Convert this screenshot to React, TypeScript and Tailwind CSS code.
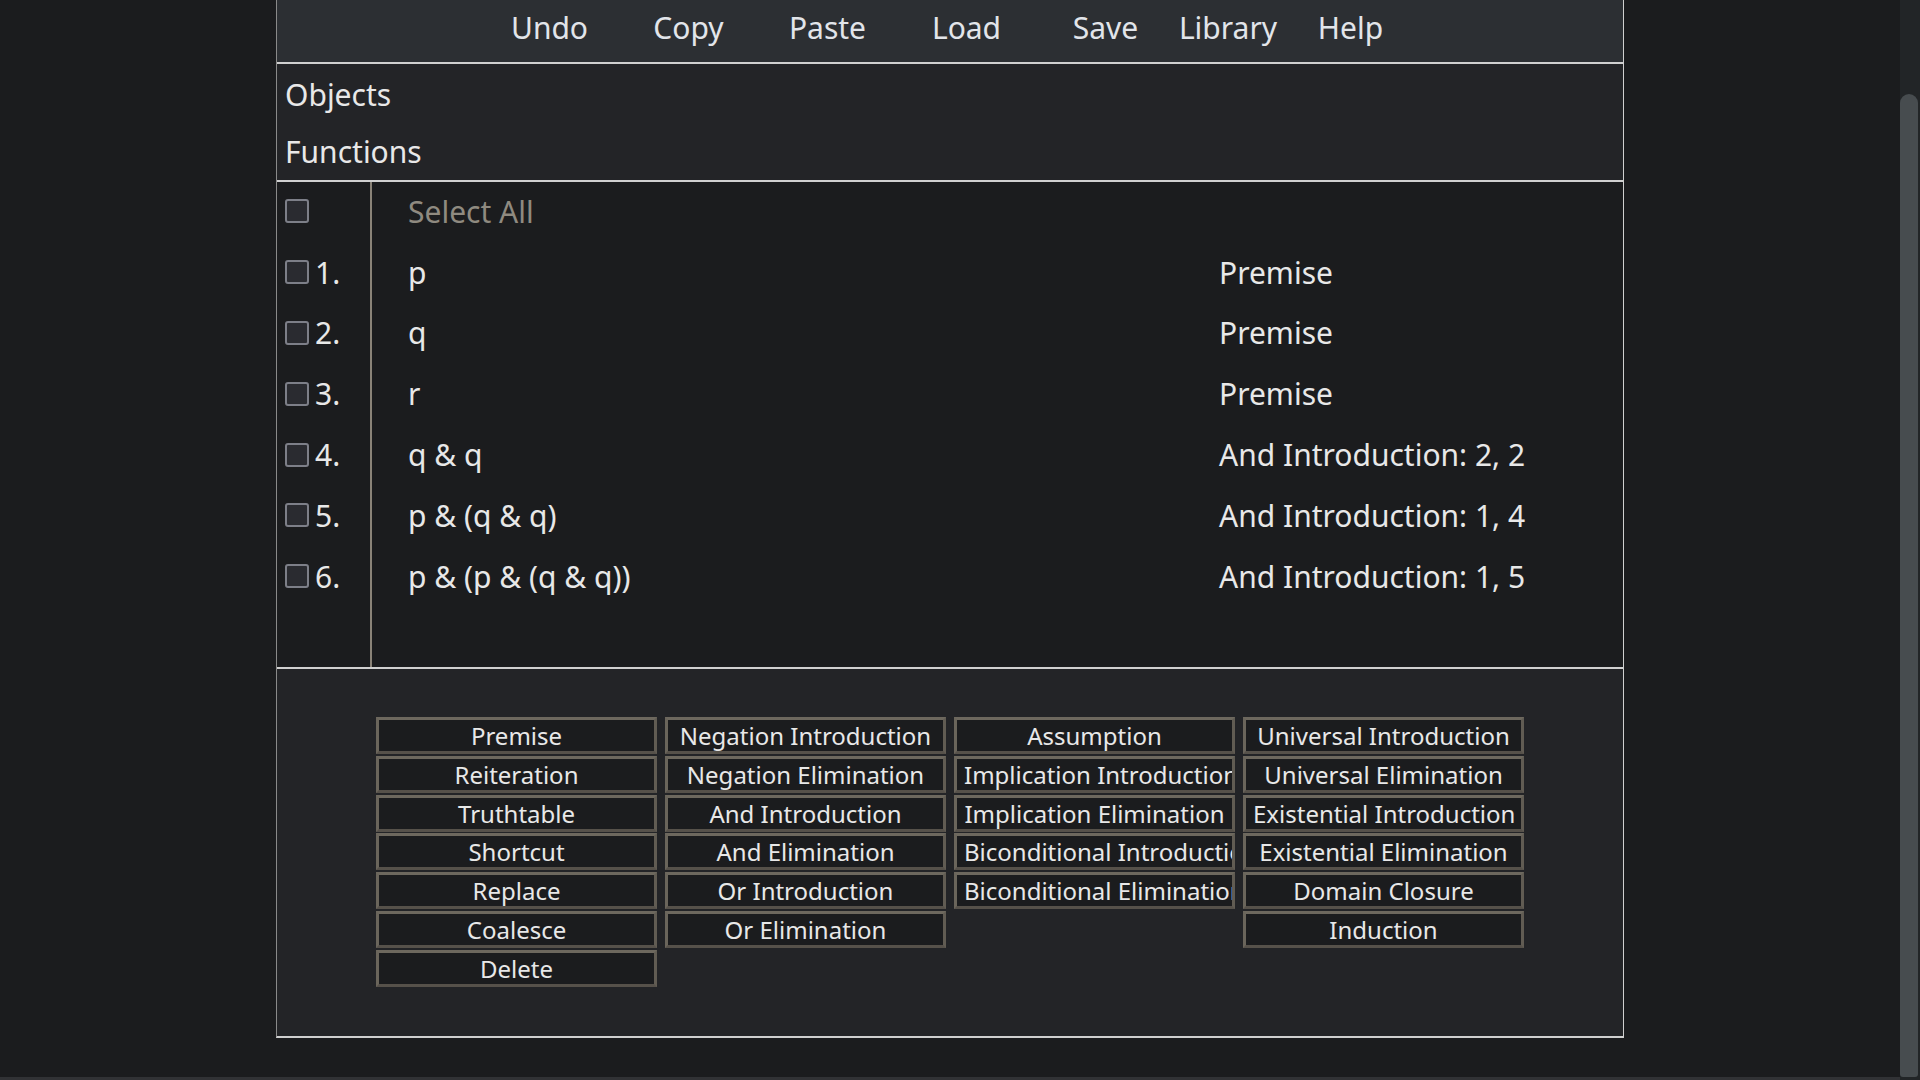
import React from "react";

const menu = [
  { label: "Undo", w: "w-[139px]" },
  { label: "Copy", w: "w-[139px]" },
  { label: "Paste", w: "w-[139px]" },
  { label: "Load", w: "w-[139px]" },
  { label: "Save", w: "w-[139px]" },
  { label: "Library", w: "w-[106px]" },
  { label: "Help", w: "w-[139px]" },
];

const lines = [
  { n: "1.", f: "p", j: "Premise" },
  { n: "2.", f: "q", j: "Premise" },
  { n: "3.", f: "r", j: "Premise" },
  { n: "4.", f: "q & q", j: "And Introduction: 2, 2" },
  { n: "5.", f: "p & (q & q)", j: "And Introduction: 1, 4" },
  { n: "6.", f: "p & (p & (q & q))", j: "And Introduction: 1, 5" },
];

const ruleColumns = [
  ["Premise", "Reiteration", "Truthtable", "Shortcut", "Replace", "Coalesce", "Delete"],
  [
    "Negation Introduction",
    "Negation Elimination",
    "And Introduction",
    "And Elimination",
    "Or Introduction",
    "Or Elimination",
  ],
  [
    "Assumption",
    "Implication Introduction",
    "Implication Elimination",
    "Biconditional Introduction",
    "Biconditional Elimination",
  ],
  [
    "Universal Introduction",
    "Universal Elimination",
    "Existential Introduction",
    "Existential Elimination",
    "Domain Closure",
    "Induction",
  ],
];

function Box() {
  return (
    <span className="inline-block w-[24px] h-[24px] shrink-0 rounded-[3px] border-2 border-[#7d7f88] bg-[#2a2b30]" />
  );
}

function RuleButton({ label }: { label: string }) {
  return (
    <button className="h-[37px] w-[281px] border-[3px] border-[#615c53] border-t-[#6d685e] border-l-[#6a655b] border-b-[#56514a] bg-[#1b1c1e] p-0">
      <div className="w-full overflow-hidden whitespace-nowrap px-[7px] text-center text-[24px] leading-[31px] text-[#e8e8e8]">
        {label}
      </div>
    </button>
  );
}

export default function App() {
  return (
    <div
      className="flex h-screen w-full overflow-hidden bg-[#1b1c1e]"
      style={{ fontFamily: '"Noto Sans", "Open Sans", sans-serif' }}
    >
      <div className="flex flex-1 flex-col">
        <div className="flex flex-1">
          <div className="w-[276px] shrink-0" />
          <div className="flex h-[1038px] w-[1348px] shrink-0 flex-col border-l border-r border-b-2 border-l-[#8a8a8a] border-r-[#cfcfcf] border-b-[#cfcfcf]">
            {/* menu */}
            <div className="flex h-[64px] justify-center border-b-2 border-[#d0d0d0] bg-[#2c2f33] pt-[7px]">
              {menu.map((m) => (
                <div key={m.label} className={`${m.w} text-center text-[30px] leading-[41px] text-[#e2e5ea]`}>
                  {m.label}
                </div>
              ))}
            </div>

            {/* objects / functions */}
            <div className="flex h-[118px] flex-col border-b-2 border-[#d0d0d0] bg-[#232427] pt-[2px] pl-[8px] text-[30px] leading-[41px] text-[#e8e8e8]">
              <div className="flex h-[57px] items-center">Objects</div>
              <div className="flex h-[57px] items-center">Functions</div>
            </div>

            {/* proof table */}
            <div className="flex h-[487px] border-b-2 border-[#d0d0d0] bg-[#1b1c1e] text-[30px] leading-[41px] text-[#e8e8e8]">
              <div className="w-[95px] shrink-0 border-r-2 border-[#8a8378]">
                <div className="flex h-[60.8px] items-center pl-[8px] pb-[2px]">
                  <Box />
                </div>
                {lines.map((l) => (
                  <div key={l.n} className="flex h-[60.8px] items-center gap-[6px] pl-[8px] pb-[2px]">
                    <Box />
                    <span>{l.n}</span>
                  </div>
                ))}
              </div>
              <div className="flex-1">
                <div className="flex h-[60.8px] items-center pl-[36px] pb-[2px] text-[#8f8a80]">Select All</div>
                {lines.map((l) => (
                  <div key={l.n} className="flex h-[60.8px] items-center pl-[36px] pb-[2px]">
                    <span className="w-[811px] shrink-0">{l.f}</span>
                    <span>{l.j}</span>
                  </div>
                ))}
              </div>
            </div>

            {/* rule buttons */}
            <div className="flex flex-1 justify-center gap-[8px] bg-[#232427] pt-[48px]">
              {ruleColumns.map((col, i) => (
                <div key={i} className="flex flex-col gap-[1.8px]">
                  {col.map((r) => (
                    <RuleButton key={r} label={r} />
                  ))}
                </div>
              ))}
            </div>
          </div>
        </div>
        <div className="h-[3px] bg-[#313235]" />
      </div>

      {/* scrollbar */}
      <div className="flex w-[20px] shrink-0 flex-col bg-[#222527] pt-[94px]">
        <div className="mr-[2px] mb-[3px] flex-1 rounded-t-[9px] rounded-b-[3px] bg-[#474c4f]" />
      </div>
    </div>
  );
}
